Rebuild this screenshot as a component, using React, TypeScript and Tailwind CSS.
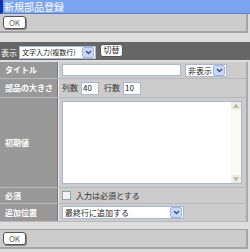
import React from 'react';

const font = "font-['Noto_Sans_CJK_JP','Noto_Sans',sans-serif]";

function OkButton() {
  return (
    <button className="h-[13px] w-[23px] rounded-[3px] border border-[#555] bg-white text-[8px] leading-none text-[#666] shadow-[1px_1px_0_#888]">
      OK
    </button>
  );
}

function Arrow() {
  return (
    <span className="flex h-[11px] w-[12px] shrink-0 items-center justify-center rounded-[2px] border border-[#9fb6e0] bg-[#c8d8f5]">
      <svg width="7" height="5" viewBox="0 0 7 5">
        <path d="M1 1 L3.5 3.5 L6 1" stroke="#3a4f8a" strokeWidth="1.4" fill="none" />
      </svg>
    </span>
  );
}

function Select({ label, width, text = 'text-[8px]' }: { label: string; width: string; text?: string }) {
  return (
    <div className={`flex h-[13px] ${width} items-center justify-between gap-[1px] border border-[#a9b8d0] bg-white pl-[2px] pr-[1px]`}>
      <span className={`shrink-0 whitespace-nowrap ${text} leading-[11px] text-[#222]`}>{label}</span>
      <Arrow />
    </div>
  );
}

function Row({ label, h, children }: { label: string; h: string; children?: React.ReactNode }) {
  return (
    <div className={`flex ${h} border-b border-[#b8b8b8]`}>
      <div className="flex w-[58px] shrink-0 items-center whitespace-nowrap border-r border-[#777] bg-[#999] pl-[5px] text-[8px] font-bold text-white">
        {label}
      </div>
      <div className="flex flex-1 items-center whitespace-nowrap border-l border-[#eee] bg-[#ccc] pl-[3px]">{children}</div>
    </div>
  );
}

export default function App() {
  return (
    <div className={`h-[252px] w-[250px] bg-[#ddd] ${font}`}>
      <div className="flex h-[14px] items-center border-b border-[#5a7fd0] border-l-[3px] border-l-[#1530b0] bg-[#7ba4f0] pl-[1px] text-[10px] leading-[13px] text-white">
        新規部品登録
      </div>
      <div className="mr-[2px] flex h-[19px] items-center border-b-2 border-r-2 border-[#a5a5a5] bg-[#ccc] pl-[3px]">
        <OkButton />
      </div>
      <div className="h-[9px]" />
      <div className="flex h-[18px] items-center gap-[2px] bg-[#666] pl-[1px]">
        <span className="mt-[4px] text-[8px] text-white">表示</span>
        <div className="mt-[2px]">
          <Select label="文字入力(複数行)" width="w-[77px]" text="text-[7px]" />
        </div>
        <button className="ml-[2px] -mt-[2px] h-[13px] w-[23px] rounded-[3px] border border-[#555] bg-white text-[8px] leading-none text-[#333]">
          切替
        </button>
      </div>
      <div className="mt-[2px] mr-[2px] border-r-2 border-[#aaa]">
        <Row label="タイトル" h="h-[17px]">
          <div className="h-[12px] w-[119px] border border-[#a9b8d0] bg-white" />
          <div className="ml-[4px]">
            <Select label="非表示" width="w-[42px]" />
          </div>
        </Row>
        <Row label="部品の大きさ" h="h-[19px]">
          <span className="text-[8px] text-[#333]">列数</span>
          <div className="ml-[3px] flex h-[13px] w-[18px] items-center border border-[#a9b8d0] bg-white pl-[1px] text-[8px] text-[#222]">40</div>
          <span className="ml-[5px] text-[8px] text-[#333]">行数</span>
          <div className="ml-[3px] flex h-[13px] w-[18px] items-center border border-[#a9b8d0] bg-white pl-[1px] text-[8px] text-[#222]">10</div>
        </Row>
        <Row label="初期値" h="h-[90px]">
          <div className="flex h-[83px] w-[180px] border border-[#a9b8d0] bg-white">
            <div className="flex-1" />
            <div className="flex w-[10px] flex-col justify-between bg-[#fbfbf2]">
              <div className="h-[8px] bg-[#eeeee2] text-center text-[6px] leading-[8px] text-[#bbb]">▲</div>
              <div className="h-[8px] bg-[#eeeee2] text-center text-[6px] leading-[8px] text-[#bbb]">▼</div>
            </div>
          </div>
        </Row>
        <Row label="必須" h="h-[16px]">
          <div className="h-[9px] w-[9px] border border-[#8aa] bg-[#f2f2f2]" />
          <span className="ml-[5px] text-[8px] text-[#333]">入力は必須とする</span>
        </Row>
        <Row label="追加位置" h="h-[18px]">
          <Select label="最終行に追加する" width="w-[122px]" />
        </Row>
      </div>
      <div className="h-[7px]" />
      <div className="mr-[2px] flex h-[20px] items-center border-t border-b-2 border-r-2 border-[#a5a5a5] bg-[#ccc] pl-[3px]">
        <OkButton />
      </div>
    </div>
  );
}
